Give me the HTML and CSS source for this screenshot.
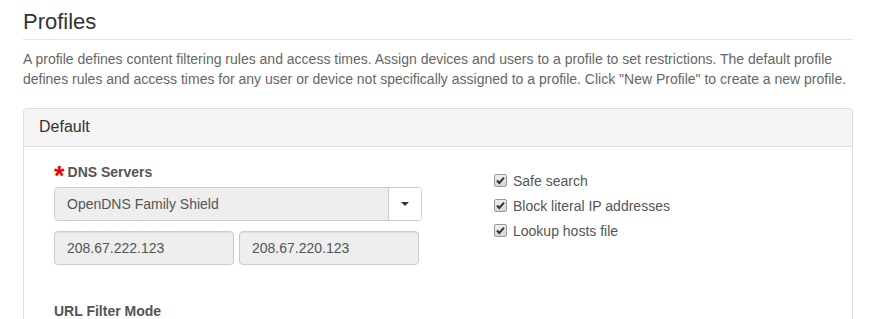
FILE: index.html
```html
<!DOCTYPE html>
<html lang="en">
<head>
    <meta charset="UTF-8">
    <meta name="viewport" content="width=device-width, initial-scale=1.0">
    <title>Profiles</title>
    <link rel="stylesheet" href="styles.css">
</head>
<body>
    <div class="page">
        <!-- Page Header -->
        <h2 class="page-header">Profiles</h2>
        <p class="intro">A profile defines content filtering rules and access times. Assign devices and users to a profile to set restrictions. The default profile defines rules and access times for any user or device not specifically assigned to a profile. Click "New Profile" to create a new profile.</p>

        <!-- Default Profile Panel -->
        <div class="panel">
            <div class="panel-heading">Default</div>
            <div class="panel-body">
                <div class="row">
                    <div class="col-left">
                        <label class="field-label"><span class="required">*</span>DNS Servers</label>
                        <div class="select-group">
                            <div class="select-value">OpenDNS Family Shield</div>
                            <div class="select-btn"><span class="caret"></span></div>
                        </div>
                        <div class="dns-inputs">
                            <input type="text" class="form-control" value="208.67.222.123" disabled>
                            <input type="text" class="form-control" value="208.67.220.123" disabled>
                        </div>
                    </div>
                    <div class="col-right">
                        <label class="check">
                            <span class="check-box"><svg viewBox="0 0 11 11" width="11" height="11"><path d="M2 5.5 L4.3 8 L9 2.6" fill="none" stroke="#333" stroke-width="2"/></svg></span>
                            Safe search
                        </label>
                        <label class="check">
                            <span class="check-box"><svg viewBox="0 0 11 11" width="11" height="11"><path d="M2 5.5 L4.3 8 L9 2.6" fill="none" stroke="#333" stroke-width="2"/></svg></span>
                            Block literal IP addresses
                        </label>
                        <label class="check">
                            <span class="check-box"><svg viewBox="0 0 11 11" width="11" height="11"><path d="M2 5.5 L4.3 8 L9 2.6" fill="none" stroke="#333" stroke-width="2"/></svg></span>
                            Lookup hosts file
                        </label>
                    </div>
                </div>
                <label class="field-label filter-label">URL Filter Mode</label>
            </div>
        </div>
    </div>
</body>
</html>
```

FILE: styles.css
```css
/* General Styling */
body {
    font-family: "Liberation Sans", Arial, sans-serif;
    font-size: 14px;
    line-height: 20px;
    color: #333;
    margin: 0;
    background: #fff;
    overflow: hidden;
}

.page {
    padding: 9px 19px 0 23px;
}

.page-header {
    font-size: 22px;
    font-weight: normal;
    line-height: 26px;
    margin: 0;
    padding-bottom: 4px;
    border-bottom: 1px solid #e5e5e5;
    color: #333;
}

.intro {
    margin: 9px 0 19px;
    color: #666;
}

/* Panel */
.panel {
    border: 1px solid #ddd;
    border-radius: 4px;
    box-shadow: 0 1px 1px rgba(0, 0, 0, 0.05);
}

.panel-heading {
    background-color: #f5f5f5;
    border-bottom: 1px solid #ddd;
    border-radius: 3px 3px 0 0;
    padding: 9px 15px 10px;
    font-size: 16px;
    line-height: 18px;
    color: #333;
}

.panel-body {
    padding: 15px 30px 40px;
}

.row {
    display: flex;
}

.col-left {
    width: 368px;
}

.col-right {
    margin-left: 72px;
    padding-top: 6px;
}

.field-label {
    display: block;
    font-weight: bold;
    color: #555;
    margin-bottom: 5px;
}

.filter-label {
    margin-top: 36px;
}

.required {
    color: #e00;
    font-size: 27px;
    line-height: 0;
    vertical-align: -8px;
    margin-right: 3px;
}

/* Select */
.select-group {
    display: flex;
    height: 32px;
    border: 1px solid #ccc;
    border-radius: 4px;
}

.select-value {
    flex: 1;
    background: #eee;
    border-radius: 3px 0 0 3px;
    border-right: 1px solid #ccc;
    padding: 6px 12px;
    line-height: 20px;
    color: #555;
}

.select-btn {
    width: 32px;
    display: flex;
    justify-content: center;
    align-items: center;
    background: #fff;
    border-radius: 0 3px 3px 0;
}

.caret {
    border-top: 4px solid #333;
    border-left: 4px solid transparent;
    border-right: 4px solid transparent;
}

.dns-inputs {
    display: flex;
    gap: 5px;
    margin-top: 10px;
}

.form-control {
    width: 180px;
    height: 34px;
    box-sizing: border-box;
    padding: 6px 12px;
    font-family: inherit;
    font-size: 14px;
    color: #555;
    background: #eee;
    border: 1px solid #ccc;
    border-radius: 4px;
    box-shadow: inset 0 1px 1px rgba(0, 0, 0, 0.075);
}

/* Checkboxes */
.check {
    display: flex;
    align-items: center;
    height: 25px;
    color: #555;
}

.check-box {
    width: 11px;
    height: 11px;
    border: 1px solid #999;
    border-radius: 2px;
    background: linear-gradient(#eee, #d6d6d6);
    margin-right: 6px;
    display: flex;
}
```
